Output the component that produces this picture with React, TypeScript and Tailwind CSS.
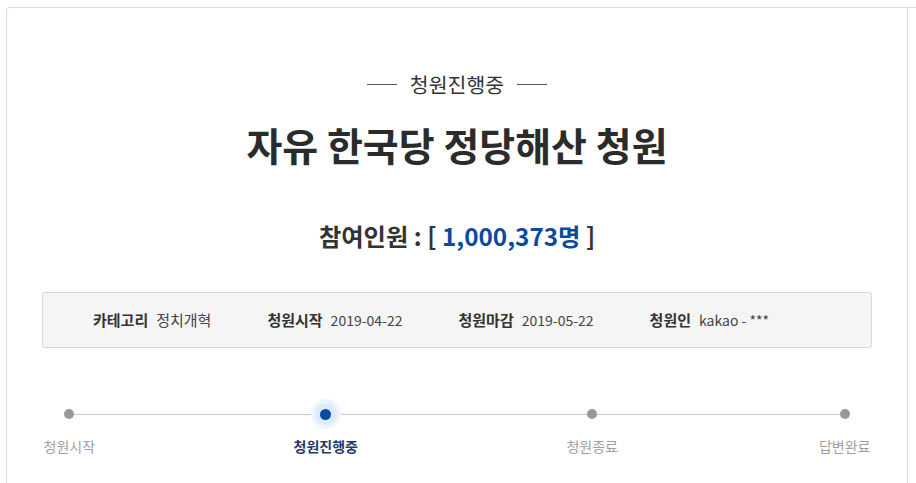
import React from 'react';

const steps = [
    { label: '청원시작', width: 'w-[55px]', ml: '', active: false },
    { label: '청원진행중', width: 'w-[69px]', ml: 'ml-[195px]', active: true },
    { label: '청원종료', width: 'w-[55px]', ml: 'ml-[205px]', active: false },
    { label: '답변완료', width: 'w-[55px]', ml: 'ml-[198px]', active: false },
];

const info = [
    { label: '카테고리', value: '정치개혁', size: 'text-[15px]' },
    { label: '청원시작', value: '2019-04-22', size: 'text-[14px]' },
    { label: '청원마감', value: '2019-05-22', size: 'text-[14px]' },
    { label: '청원인', value: 'kakao - ***', size: 'text-[14px]' },
];

export default function App() {
    return (
        <div
            className="min-h-screen bg-white pt-[7px] pl-[6px] text-[#333]"
            style={{ fontFamily: '"Noto Sans CJK KR", "Noto Sans", sans-serif' }}
        >
            <div className="border-t border-l border-[#dddddd] rounded-tl-[4px]">
                <div className="w-[901px] h-[476px] border-r border-[#dddddd]">

                    {/* Status */}
                    <div className="pt-[62px] flex items-center justify-center">
                        <span className="w-[30px] h-px bg-[#555]" />
                        <span className="mx-[13px] text-[20.5px] leading-[28px] text-[#333]">청원진행중</span>
                        <span className="w-[30px] h-px bg-[#555]" />
                    </div>

                    {/* Title */}
                    <h1 className="mt-[22px] text-center text-[39px] leading-[48px] font-bold text-[#2b2b2b]">
                        자유 한국당 정당해산 청원
                    </h1>

                    {/* Count */}
                    <h2 className="mt-[52px] text-center text-[24.3px] leading-[32px] font-bold text-[#333]">
                        참여인원 : [ <span className="text-[#0a4a9f]">1,000,373명</span> ]
                    </h2>

                    {/* Info bar */}
                    <div className="mt-[40px] mx-[35px] h-[56px] bg-[#f5f5f5] border border-[#d9d9d9] rounded-[3px] flex items-center pl-[50px] gap-[56px]">
                        {info.map((item) => (
                            <div key={item.label} className="flex items-center">
                                <span className="text-[15px] font-bold text-[#333]">{item.label}</span>
                                <span className={`ml-2 ${item.size} text-[#444]`}>{item.value}</span>
                            </div>
                        ))}
                    </div>

                    {/* Progress */}
                    <div className="mt-[51px] mx-[35px] relative">
                        <div className="absolute left-[27px] right-[27px] top-[15px] h-px bg-[#c8c8c8]" />
                        <div className="relative flex">
                            {steps.map((s) => (
                                <div key={s.label} className={`${s.width} ${s.ml} flex flex-col items-center`}>
                                    <div className="h-[30px] w-[30px] flex items-center justify-center">
                                        {s.active ? (
                                            <div className="w-[30px] h-[30px] rounded-full bg-[#eef5fe] flex items-center justify-center">
                                                <div className="w-[22px] h-[22px] rounded-full bg-[#dcebfc] flex items-center justify-center">
                                                    <div className="w-[11px] h-[11px] rounded-full bg-[#0a4a9f]" />
                                                </div>
                                            </div>
                                        ) : (
                                            <div className="w-[10px] h-[10px] rounded-full bg-[#999]" />
                                        )}
                                    </div>
                                    <span
                                        className={`mt-[7px] whitespace-nowrap text-[14px] leading-[20px] ${
                                            s.active ? 'font-bold text-[#1c3a6b]' : 'text-[#a0a0a0]'
                                        }`}
                                    >
                                        {s.label}
                                    </span>
                                </div>
                            ))}
                        </div>
                    </div>
                </div>
            </div>
        </div>
    );
}
